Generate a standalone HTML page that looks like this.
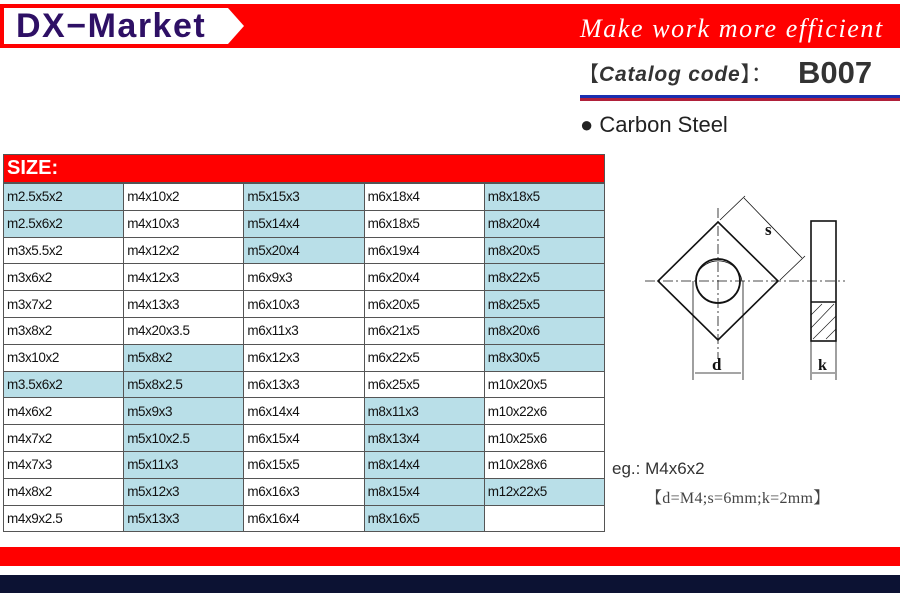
<!DOCTYPE html>
<html><head><meta charset="utf-8"><style>
body{margin:0;width:900px;height:593px;position:relative;background:#fff;font-family:"Liberation Sans",sans-serif;overflow:hidden}
.abs{position:absolute}
table{border-collapse:collapse;position:absolute;left:3px;top:183px;width:602px}
td{border:1px solid #555;height:25.8px;padding:0 0 0 3px;font-size:13.5px;color:#111;width:116px;letter-spacing:-0.4px}
td.b{background:#b9dfe8}
</style></head><body>
<div class="abs" style="left:0;top:4px;width:900px;height:44px;background:#f00"></div>
<svg class="abs" style="left:0;top:4px" width="250" height="44"><polygon points="4,4 228,4 244,22 228,40 4,40" fill="#fff"/></svg>
<div class="abs" style="left:16px;top:7px;font-size:34px;font-weight:bold;color:#2e1065;letter-spacing:1.5px">DX−Market</div>
<div class="abs" style="left:580px;top:14px;font-size:26px;color:#fff;font-family:'Liberation Serif',serif;font-style:italic;letter-spacing:1.6px">Make work more efficient</div>
<div class="abs" style="left:578px;top:58px;font-size:21px;color:#333"><span style="font-family:'Noto Sans CJK SC',sans-serif">【</span><i style="font-weight:bold;letter-spacing:0.8px">Catalog code</i><span style="font-family:'Noto Sans CJK SC',sans-serif">】：</span></div>
<div class="abs" style="left:798px;top:55px;font-size:31px;font-weight:bold;color:#333">B007</div>
<div class="abs" style="left:580px;top:95px;width:320px;height:3px;background:#1a2fb0"></div>
<div class="abs" style="left:580px;top:98px;width:320px;height:3px;background:#b0203a"></div>
<div class="abs" style="left:580px;top:112px;font-size:22px;color:#222">● Carbon Steel</div>
<div class="abs" style="left:3px;top:154px;width:602px;height:29px;background:#f00;border:1px solid #555;box-sizing:border-box"></div>
<div class="abs" style="left:7px;top:157px;font-size:20px;font-weight:bold;color:#fff">SIZE:</div>
<table>
<tr><td class="b">m2.5x5x2</td><td>m4x10x2</td><td class="b">m5x15x3</td><td>m6x18x4</td><td class="b">m8x18x5</td></tr>
<tr><td class="b">m2.5x6x2</td><td>m4x10x3</td><td class="b">m5x14x4</td><td>m6x18x5</td><td class="b">m8x20x4</td></tr>
<tr><td>m3x5.5x2</td><td>m4x12x2</td><td class="b">m5x20x4</td><td>m6x19x4</td><td class="b">m8x20x5</td></tr>
<tr><td>m3x6x2</td><td>m4x12x3</td><td>m6x9x3</td><td>m6x20x4</td><td class="b">m8x22x5</td></tr>
<tr><td>m3x7x2</td><td>m4x13x3</td><td>m6x10x3</td><td>m6x20x5</td><td class="b">m8x25x5</td></tr>
<tr><td>m3x8x2</td><td>m4x20x3.5</td><td>m6x11x3</td><td>m6x21x5</td><td class="b">m8x20x6</td></tr>
<tr><td>m3x10x2</td><td class="b">m5x8x2</td><td>m6x12x3</td><td>m6x22x5</td><td class="b">m8x30x5</td></tr>
<tr><td class="b">m3.5x6x2</td><td class="b">m5x8x2.5</td><td>m6x13x3</td><td>m6x25x5</td><td>m10x20x5</td></tr>
<tr><td>m4x6x2</td><td class="b">m5x9x3</td><td>m6x14x4</td><td class="b">m8x11x3</td><td>m10x22x6</td></tr>
<tr><td>m4x7x2</td><td class="b">m5x10x2.5</td><td>m6x15x4</td><td class="b">m8x13x4</td><td>m10x25x6</td></tr>
<tr><td>m4x7x3</td><td class="b">m5x11x3</td><td>m6x15x5</td><td class="b">m8x14x4</td><td>m10x28x6</td></tr>
<tr><td>m4x8x2</td><td class="b">m5x12x3</td><td>m6x16x3</td><td class="b">m8x15x4</td><td class="b">m12x22x5</td></tr>
<tr><td>m4x9x2.5</td><td class="b">m5x13x3</td><td>m6x16x4</td><td class="b">m8x16x5</td><td></td></tr>
</table>
<svg class="abs" style="left:600px;top:180px" width="300" height="220" fill="none" stroke="#111">
<polygon points="118,42 178,101 118,160 58,101" stroke-width="1.6"/>
<circle cx="118" cy="101" r="22" stroke-width="1.8"/>
<path d="M96,96 A24,24 0 0 1 142,101" stroke-width="0.8"/>
<path d="M45,101 H245" stroke-width="0.8" stroke-dasharray="10,3,2,3"/>
<path d="M118,28 V178" stroke-width="0.8" stroke-dasharray="10,3,2,3"/>
<path d="M93,101 V200 M143,101 V200 M95,193 H141" stroke-width="0.8"/>
<path d="M120,40 L145,16 M180,100 L205,76 M144,18 L202,78" stroke-width="0.8"/>
<rect x="211" y="41" width="25" height="120" stroke-width="1.6"/>
<path d="M211,122 H236" stroke-width="1.5"/>
<path d="M211,135 L222,124 M211,148 L234,124 M213,159 L236,136 M226,159 L236,149" stroke-width="0.6"/>
<path d="M211,161 V200 M236,161 V200 M212,193 H235" stroke-width="0.8"/>
<text x="112" y="190" font-family="Liberation Serif" font-size="17" font-weight="bold" fill="#111" stroke="none">d</text>
<text x="165" y="55" font-family="Liberation Serif" font-size="17" font-weight="bold" fill="#111" stroke="none">s</text>
<text x="218" y="190" font-family="Liberation Serif" font-size="16" font-weight="bold" fill="#111" stroke="none">k</text>
</svg>
<div class="abs" style="left:612px;top:459px;font-size:17px;color:#333">eg.: M4x6x2</div>
<div class="abs" style="left:646px;top:485px;font-size:16px;color:#444;font-family:'Liberation Serif','Noto Serif CJK SC',serif;letter-spacing:0.3px">【d=M4;s=6mm;k=2mm】</div>
<div class="abs" style="left:0;top:547px;width:900px;height:19px;background:#f00"></div>
<div class="abs" style="left:0;top:575px;width:900px;height:18px;background:#0c1233"></div>
</body></html>
